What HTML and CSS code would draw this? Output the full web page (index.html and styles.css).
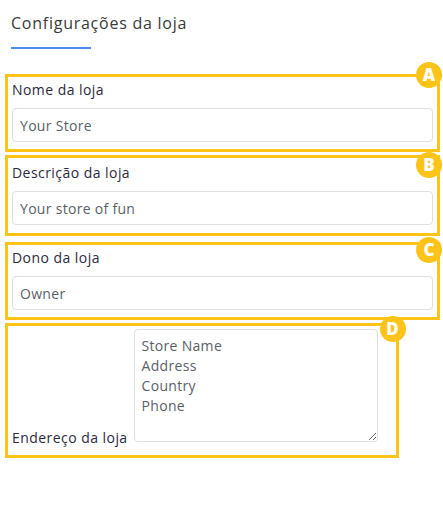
FILE: index.html
```html
<!DOCTYPE html>
<html lang="pt">
<head>
    <meta charset="UTF-8">
    <meta name="viewport" content="width=device-width, initial-scale=1.0">
    <title>Configurações da loja</title>
    <link rel="stylesheet" href="styles.css">
</head>
<body>
    <div class="page">
        <h2 class="title">Configurações da loja</h2>
        <div class="title-line"></div>

        <div class="field field-a">
            <label for="storeName">Nome da loja</label>
            <input type="text" id="storeName" value="Your Store">
            <span class="badge">A</span>
        </div>

        <div class="field field-b">
            <label for="storeDesc">Descrição da loja</label>
            <input type="text" id="storeDesc" value="Your store of fun">
            <span class="badge">B</span>
        </div>

        <div class="field field-c">
            <label for="storeOwner">Dono da loja</label>
            <input type="text" id="storeOwner" value="Owner">
            <span class="badge">C</span>
        </div>

        <div class="field field-d">
            <label for="storeAddress">Endereço da loja</label>
            <textarea id="storeAddress">Store Name
Address
Country
Phone</textarea>
            <span class="badge">D</span>
        </div>
    </div>
</body>
</html>
```

FILE: styles.css
```css
body {
    margin: 0;
    font-family: "Open Sans", sans-serif;
    background-color: #fff;
}

.page {
    padding: 0 3px 0 5px;
}

.title {
    margin: 11px 0 0 6px;
    font-size: 16px;
    font-weight: 400;
    line-height: 24px;
    letter-spacing: 0.75px;
    color: #3a3a3a;
}

.title-line {
    width: 80px;
    height: 2px;
    margin: 12px 0 0 6px;
    background-color: #4a8fe7;
}

.field {
    position: relative;
    border: 3px solid #fcc419;
    padding: 2px 4px 7px;
}

.field label {
    display: block;
    font-size: 14px;
    line-height: 21px;
    letter-spacing: 0.45px;
    color: #2d2a3e;
    margin-bottom: 8px;
}

.field input {
    display: block;
    width: 100%;
    box-sizing: border-box;
    height: 34px;
    padding: 0 7px;
    border: 1px solid #e0e0e0;
    border-radius: 4px;
    font-family: inherit;
    font-size: 14px;
    letter-spacing: 0.3px;
    color: #5a5f69;
}

.field-a {
    margin-top: 25px;
}

.field-b {
    margin-top: 3px;
    padding-top: 4px;
    padding-bottom: 8px;
}

.field-c {
    margin-top: 6px;
}

.field-d {
    margin-top: 3px;
    display: inline-flex;
    align-items: flex-end;
    padding: 3px 18px 7px 4px;
}

.field-d label {
    margin-bottom: 0;
}

.field-d textarea {
    width: 244px;
    height: 113px;
    box-sizing: border-box;
    margin: 0 0 6px 6px;
    padding: 6px 7px;
    border: 1px solid #e0e0e0;
    border-radius: 4px;
    font-family: inherit;
    font-size: 14px;
    line-height: 20px;
    letter-spacing: 0.3px;
    color: #5a5f69;
}

.badge {
    position: absolute;
    right: -5px;
    top: -15px;
    width: 26px;
    height: 26px;
    border-radius: 50%;
    background-color: #fcc419;
    color: #fff;
    font-size: 17px;
    font-weight: 800;
    line-height: 26px;
    text-align: center;
}

.field-b .badge {
    top: -6px;
}

.field-c .badge {
    top: -8px;
}

.field-d .badge {
    right: -10px;
    top: -10px;
}
```
